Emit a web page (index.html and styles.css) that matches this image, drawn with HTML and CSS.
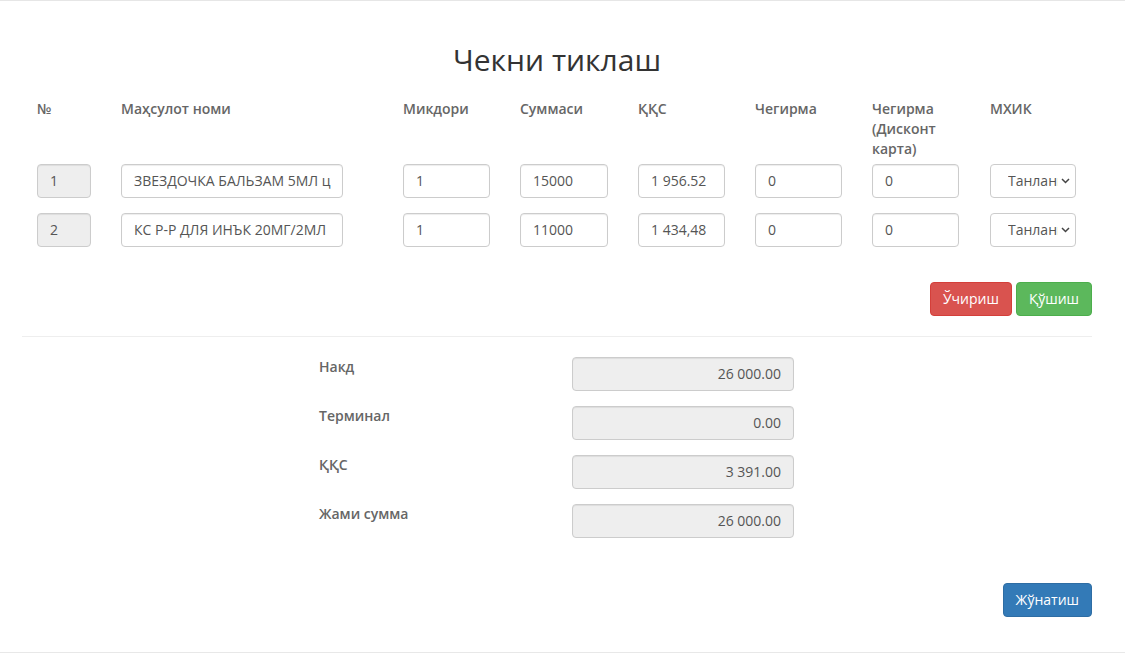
FILE: index.html
```html
<!DOCTYPE html>
<html lang="uz">
<head>
<meta charset="utf-8">
<title>Чекни тиклаш</title>
<link rel="stylesheet" href="styles.css">
</head>
<body>
<div class="page">
  <h2 class="title">Чекни тиклаш</h2>

  <div class="tbl">
    <div class="trow thead">
      <div class="cell"><span class="th w54">№</span></div>
      <div class="cell"><span class="th w222">Маҳсулот номи</span></div>
      <div class="cell"><span class="th w88">Микдори</span></div>
      <div class="cell"><span class="th w88">Суммаси</span></div>
      <div class="cell"><span class="th w88">ҚҚС</span></div>
      <div class="cell"><span class="th w88">Чегирма</span></div>
      <div class="cell"><span class="th w88">Чегирма (Дисконт карта)</span></div>
      <div class="cell"><span class="th w88">МХИК</span></div>
    </div>

    <div class="trow">
      <div class="cell"><div class="inp dis w54">1</div></div>
      <div class="cell"><div class="inp w222">ЗВЕЗДОЧКА БАЛЬЗАМ 5МЛ ц</div></div>
      <div class="cell"><div class="inp w87">1</div></div>
      <div class="cell"><div class="inp w88">15000</div></div>
      <div class="cell"><div class="inp w87">1 956.52</div></div>
      <div class="cell"><div class="inp w87">0</div></div>
      <div class="cell"><div class="inp w87">0</div></div>
      <div class="cell"><div class="sel"><span class="sel-text">Танланг</span><svg class="chev" width="9" height="6" viewBox="0 0 9 6"><path d="M1 1l3.5 3.5L8 1" fill="none" stroke="#444" stroke-width="1.5"/></svg></div></div>
    </div>

    <div class="trow">
      <div class="cell"><div class="inp dis w54">2</div></div>
      <div class="cell"><div class="inp w222">КС Р-Р ДЛЯ ИНЪК 20МГ/2МЛ</div></div>
      <div class="cell"><div class="inp w87">1</div></div>
      <div class="cell"><div class="inp w88">11000</div></div>
      <div class="cell"><div class="inp w87">1 434,48</div></div>
      <div class="cell"><div class="inp w87">0</div></div>
      <div class="cell"><div class="inp w87">0</div></div>
      <div class="cell"><div class="sel"><span class="sel-text">Танланг</span><svg class="chev" width="9" height="6" viewBox="0 0 9 6"><path d="M1 1l3.5 3.5L8 1" fill="none" stroke="#444" stroke-width="1.5"/></svg></div></div>
    </div>
  </div>

  <div class="actions">
    <button class="btn btn-danger">Ўчириш</button>
    <button class="btn btn-success">Қўшиш</button>
  </div>

  <hr class="sep">

  <div class="summary">
    <div class="srow"><span class="slabel">Накд</span><div class="inp dis right w222">26 000.00</div></div>
    <div class="srow"><span class="slabel">Терминал</span><div class="inp dis right w222">0.00</div></div>
    <div class="srow"><span class="slabel">ҚҚС</span><div class="inp dis right w222">3 391.00</div></div>
    <div class="srow"><span class="slabel">Жами сумма</span><div class="inp dis right w222">26 000.00</div></div>
  </div>

  <div class="submit">
    <button class="btn btn-primary">Жўнатиш</button>
  </div>
</div>
</body>
</html>
```

FILE: styles.css
```css
* { box-sizing: border-box; }

html, body {
  margin: 0;
  padding: 0;
  background: #fff;
}

body {
  font-family: "Open Sans", "Liberation Sans", sans-serif;
  font-size: 14px;
  line-height: 20px;
  color: #333;
}

.page {
  width: 1125px;
  height: 653px;
  border-top: 1px solid #e6e6e6;
  border-bottom: 1px solid #e8e8e8;
  padding: 0 33px 0 22px;
  display: flex;
  flex-direction: column;
}

.title {
  margin: 42px 0 0 0;
  height: 56px;
  font-size: 30px;
  font-weight: 400;
  line-height: 33px;
  text-align: center;
  color: #333;
}

.tbl {
  display: flex;
  flex-direction: column;
}

.trow {
  display: grid;
  grid-template-columns: 84px 282px 117px 118px 117px 117px 118px 117px;
  margin-bottom: 15px;
}

.trow.thead {
  margin-bottom: 5px;
  align-items: start;
}

.trow:last-child { margin-bottom: 0; }

.cell {
  padding-left: 15px;
}

.th {
  display: block;
  font-weight: 600;
  color: #666;
  line-height: 20px;
}

.w54 { width: 54px; }
.w87 { width: 87px; }
.w88 { width: 88px; }
.w222 { width: 222px; }

.inp {
  height: 34px;
  padding: 6px 12px;
  border: 1px solid #ccc;
  border-radius: 4px;
  background: #fff;
  color: #555;
  font-size: 14px;
  line-height: 20px;
  white-space: nowrap;
  overflow: hidden;
  box-shadow: inset 0 1px 1px rgba(0, 0, 0, 0.075);
}

.inp.dis { background: #eee; }
.inp.right { text-align: right; }

.sel {
  width: 86px;
  height: 34px;
  border: 1px solid #ccc;
  border-radius: 4px;
  background: #fff;
  display: flex;
  align-items: center;
  padding: 0 5px 0 17px;
  gap: 3px;
  color: #555;
}

.sel-text {
  flex: 1;
  min-width: 0;
  overflow: hidden;
  white-space: nowrap;
}

.chev { flex: none; }

.actions {
  margin-top: 35px;
  display: flex;
  justify-content: flex-end;
  gap: 4px;
}

.btn {
  font-family: "Open Sans", "Liberation Sans", sans-serif;
  font-size: 14px;
  line-height: 20px;
  padding: 6px 12px;
  border: 1px solid transparent;
  border-radius: 4px;
  color: #fff;
  cursor: pointer;
}

.btn-danger { background: #d9534f; border-color: #d43f3a; }
.btn-success { background: #5cb85c; border-color: #4cae4c; }
.btn-primary { background: #337ab7; border-color: #2e6da4; }

.sep {
  margin: 20px 0 20px 0;
  border: 0;
  border-top: 1px solid #eee;
  height: 0;
}

.summary {
  display: flex;
  flex-direction: column;
  gap: 15px;
}

.srow {
  display: grid;
  grid-template-columns: 253px 222px;
  margin-left: 297px;
  align-items: start;
}

.slabel {
  font-weight: 600;
  color: #666;
  line-height: 20px;
}

.submit {
  margin-top: 45px;
  display: flex;
  justify-content: flex-end;
}
```
